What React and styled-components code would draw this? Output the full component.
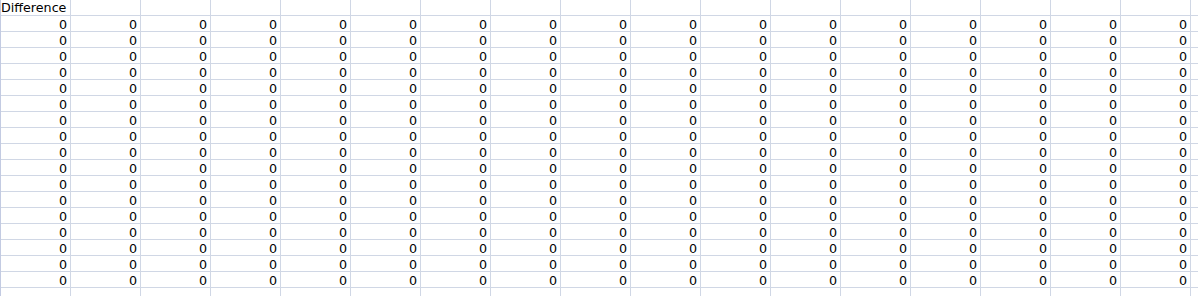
import React from "react";
import styled, { createGlobalStyle } from "styled-components";

const GlobalStyle = createGlobalStyle`
  html, body {
    margin: 0;
    padding: 0;
    background: #ffffff;
    overflow: hidden;
  }
`;

const Sheet = styled.div`
  display: grid;
  grid-template-columns: repeat(18, 70px);
  width: 1198px;
  height: 296px;
  overflow: hidden;
  border-left: 1px solid #c3cbe2;
  box-sizing: border-box;
  font-family: "DejaVu Sans", Verdana, sans-serif;
  font-size: 12.7px;
  color: #000000;
`;

const Cell = styled.div`
  box-sizing: border-box;
  height: 16px;
  border-right: 1px solid #d0d7e5;
  border-bottom: 1px solid #d0d7e5;
  display: flex;
  align-items: flex-end;
  justify-content: ${(p) => (p.$num ? "flex-end" : "flex-start")};
  padding: ${(p) => (p.$num ? "0 3px 0 0" : "0 0 1px 0")};
  white-space: nowrap;
  line-height: 12px;
`;

const COLS = 18;
const ROWS = 17;

const App = () => {
  const header = Array.from({ length: COLS }, (_, c) => (
    <Cell key={"h" + c}>{c === 0 ? "Difference" : ""}</Cell>
  ));

  const rows = [];
  for (let r = 0; r < ROWS + 1; r++) {
    for (let c = 0; c < COLS; c++) {
      const filled = r < ROWS && c < COLS - 1;
      rows.push(
        <Cell key={r + "-" + c} $num>
          {filled ? "0" : ""}
        </Cell>
      );
    }
  }

  return (
    <>
      <GlobalStyle />
      <Sheet>
        {header}
        {rows}
      </Sheet>
    </>
  );
};

export default App;
